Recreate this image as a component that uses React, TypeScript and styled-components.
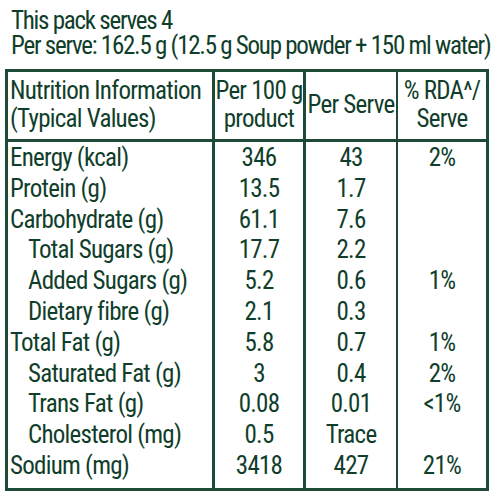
import styled, { createGlobalStyle } from "styled-components"

const Global = createGlobalStyle`
  body {
    margin: 0;
    background: #fff;
    color: #103e2b;
    font-family: Roboto, "Liberation Sans", sans-serif;
    font-stretch: 87.5%;
    font-size: 25px;
    letter-spacing: -0.75px;
  }
`

type Nutrient = {
  name: string
  per100: string
  perServe: string
  rda?: string
  sub?: boolean
}

const rows: Nutrient[] = [
  { name: "Energy (kcal)", per100: "346", perServe: "43", rda: "2%" },
  { name: "Protein (g)", per100: "13.5", perServe: "1.7" },
  { name: "Carbohydrate (g)", per100: "61.1", perServe: "7.6" },
  { name: "Total Sugars (g)", per100: "17.7", perServe: "2.2", sub: true },
  { name: "Added Sugars (g)", per100: "5.2", perServe: "0.6", rda: "1%", sub: true },
  { name: "Dietary fibre (g)", per100: "2.1", perServe: "0.3", sub: true },
  { name: "Total Fat (g)", per100: "5.8", perServe: "0.7", rda: "1%" },
  { name: "Saturated Fat (g)", per100: "3", perServe: "0.4", rda: "2%", sub: true },
  { name: "Trans Fat (g)", per100: "0.08", perServe: "0.01", rda: "<1%", sub: true },
  { name: "Cholesterol (mg)", per100: "0.5", perServe: "Trace", sub: true },
  { name: "Sodium (mg)", per100: "3418", perServe: "427", rda: "21%" },
]

export default function App() {
  return (
    <>
      <Global />
      <Page>
        <Intro>
          <div>This pack serves 4</div>
          <div>Per serve: 162.5 g (12.5 g Soup powder + 150 ml water)</div>
        </Intro>
        <Table>
          <HeadRow>
            <HeadCell $align="left">
              Nutrition Information
              <br />
              (Typical Values)
            </HeadCell>
            <HeadCell $line={3}>
              Per 100 g
              <br />
              product
            </HeadCell>
            <HeadCell $line={3}>Per Serve</HeadCell>
            <HeadCell $line={2}>
              % RDA^/
              <br />
              Serve
            </HeadCell>
          </HeadRow>
          {rows.map((r, i) => {
            const edge = i === 0 ? "first" : i === rows.length - 1 ? "last" : undefined
            return (
              <Row key={r.name}>
                <Cell $align="left" $indent={r.sub} $edge={edge}>
                  {r.name}
                </Cell>
                <Cell $line={3} $edge={edge}>{r.per100}</Cell>
                <Cell $line={3} $edge={edge}>{r.perServe}</Cell>
                <Cell $line={2} $edge={edge}>{r.rda}</Cell>
              </Row>
            )
          })}
        </Table>
      </Page>
    </>
  )
}

const Page = styled.div`
  padding-top: 8px;
  width: 500px;
`

const Intro = styled.div`
  padding-left: 11px;
  line-height: 25px;
  letter-spacing: -1.25px;
  white-space: nowrap;
  margin-bottom: 11px;
`

const Table = styled.div`
  margin-left: 5px;
  width: 484px;
  box-sizing: border-box;
  border: 3px solid #1c4a36;
`

const Row = styled.div`
  display: grid;
  grid-template-columns: 204px 91px 93px 90px;
`

const HeadRow = styled(Row)`
  border-bottom: 3px solid #1c4a36;
`

const HeadCell = styled.div<{ $align?: "left"; $line?: number }>`
  display: flex;
  flex-direction: column;
  justify-content: center;
  padding: 5px 0 6px ${p => (p.$align ? "2px" : "0")};
  text-align: ${p => p.$align ?? "center"};
  line-height: 28px;
  white-space: nowrap;
  border-left: ${p => (p.$line ? `${p.$line}px solid #1c4a36` : "none")};
`

const Cell = styled.div<{
  $align?: "left"
  $indent?: boolean
  $line?: number
  $edge?: "first" | "last"
}>`
  padding-top: ${p => (p.$edge === "first" ? "1px" : "0")};
  padding-bottom: ${p => (p.$edge === "last" ? "6px" : "0")};
  padding-left: ${p => (p.$align ? (p.$indent ? "20px" : "2px") : "0")};
  text-align: ${p => p.$align ?? "center"};
  line-height: 30.8px;
  white-space: nowrap;
  border-left: ${p => (p.$line ? `${p.$line}px solid #1c4a36` : "none")};
`
